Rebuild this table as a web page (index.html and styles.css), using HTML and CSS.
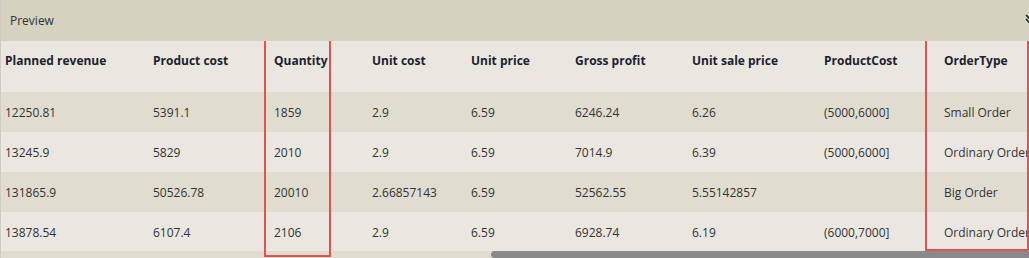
FILE: index.html
```html
<!DOCTYPE html>
<html>
<head>
<meta charset="utf-8">
<link rel="stylesheet" href="styles.css">
</head>
<body>
<div class="panel">
  <div class="topbar">
    <span class="title">Preview</span>
    <svg class="collapse" width="12" height="12" viewBox="0 0 12 12"><path d="M2 2 L6 6 L10 2 M2 6 L6 10 L10 6" fill="none" stroke="#222" stroke-width="1.6"/></svg>
  </div>
  <div class="grid-wrap">
    <div class="row head">
      <div class="c">Planned revenue</div><div class="c">Product cost</div><div class="c">Quantity</div><div class="c">Unit cost</div><div class="c">Unit price</div><div class="c">Gross profit</div><div class="c">Unit sale price</div><div class="c">ProductCost</div><div class="c">OrderType</div>
    </div>
    <div class="row odd">
      <div class="c">12250.81</div><div class="c">5391.1</div><div class="c">1859</div><div class="c">2.9</div><div class="c">6.59</div><div class="c">6246.24</div><div class="c">6.26</div><div class="c">(5000,6000]</div><div class="c">Small Order</div>
    </div>
    <div class="row even">
      <div class="c">13245.9</div><div class="c">5829</div><div class="c">2010</div><div class="c">2.9</div><div class="c">6.59</div><div class="c">7014.9</div><div class="c">6.39</div><div class="c">(5000,6000]</div><div class="c">Ordinary Order</div>
    </div>
    <div class="row odd">
      <div class="c">131865.9</div><div class="c">50526.78</div><div class="c">20010</div><div class="c">2.66857143</div><div class="c">6.59</div><div class="c">52562.55</div><div class="c">5.55142857</div><div class="c"></div><div class="c">Big Order</div>
    </div>
    <div class="row even">
      <div class="c">13878.54</div><div class="c">6107.4</div><div class="c">2106</div><div class="c">2.9</div><div class="c">6.59</div><div class="c">6928.74</div><div class="c">6.19</div><div class="c">(6000,7000]</div><div class="c">Ordinary Order</div>
    </div>
    <div class="hscroll"><div class="thumb"></div></div>
    <div class="mark mark-qty"></div>
    <div class="mark mark-type"></div>
  </div>
</div>
</body>
</html>
```
FILE: styles.css
```css
* { box-sizing: border-box; }
html, body { margin: 0; padding: 0; }
body {
  width: 1029px;
  height: 258px;
  overflow: hidden;
  background: #e9e7df;
  font-family: "Open Sans", "Noto Sans", sans-serif;
  font-size: 12px;
  color: #333;
}
.panel {
  position: relative;
  height: 258px;
  border-left: 1px solid #cfcdc2;
}
.topbar {
  height: 41px;
  background: #d5d2c0;
  display: flex;
  align-items: center;
  padding-left: 9px;
  position: relative;
}
.title { color: #333; font-size: 12px; }
.collapse {
  position: absolute;
  left: 1023px;
  top: 13px;
}
.grid-wrap {
  position: relative;
  height: 217px;
  overflow: hidden;
}
.row {
  display: grid;
  grid-template-columns: 148px 121px 98px 99px 104px 117px 132px 120px 140px;
  width: 1080px;
  height: 40px;
  align-items: center;
}
.row .c { padding-left: 4px; white-space: nowrap; }
.row.head {
  height: 51px;
  align-items: start;
  padding-top: 11px;
  font-weight: 700;
  color: #1e1e30;
  background: #e9e7df;
}
.row.odd { background: #e0ddd0; }
.row.even { background: #e9e7e0; }
.hscroll {
  height: 7px;
  background: #e0ddd0;
  position: relative;
  margin-top: -1px;
}
.thumb {
  position: absolute;
  left: 490px;
  right: 0;
  top: 0;
  bottom: 0;
  background: #8a8a8a;
  border-radius: 4px 0 0 4px;
}
.mark {
  position: absolute;
  border: 2px solid #e8504f;
}
.mark-qty { left: 263px; width: 67px; top: -3px; height: 219px; }
.mark-type { left: 924px; width: 104px; top: -3px; height: 213px; }
```
